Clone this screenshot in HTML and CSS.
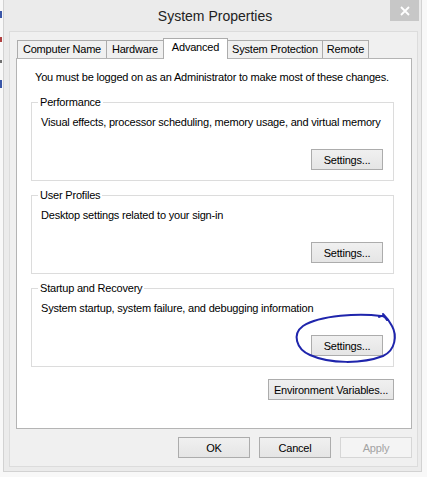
FILE: index.html
```html
<!DOCTYPE html>
<html>
<head>
<meta charset="utf-8">
<title>System Properties</title>
<link rel="stylesheet" href="styles.css">
</head>
<body>
<div class="window">
  <div class="titlebar">
    <div class="title">System Properties</div>
    <button class="close" aria-label="Close">
      <svg width="10" height="10" viewBox="0 0 10 10"><path d="M1 1 L9 9 M9 1 L1 9" stroke="#fff" stroke-width="1.8" fill="none"/></svg>
    </button>
  </div>
  <div class="client">
    <div class="tabs">
      <div class="tab tab-cn">Computer Name</div>
      <div class="tab tab-hw">Hardware</div>
      <div class="tab tab-adv active">Advanced</div>
      <div class="tab tab-sp">System Protection</div>
      <div class="tab tab-rm">Remote</div>
    </div>
    <div class="panel">
      <p class="intro">You must be logged on as an Administrator to make most of these changes.</p>
      <fieldset class="group">
        <legend>Performance</legend>
        <p class="desc">Visual effects, processor scheduling, memory usage, and virtual memory</p>
        <div class="btn-row"><button class="btn">Settings...</button></div>
      </fieldset>
      <fieldset class="group">
        <legend>User Profiles</legend>
        <p class="desc">Desktop settings related to your sign-in</p>
        <div class="btn-row"><button class="btn">Settings...</button></div>
      </fieldset>
      <fieldset class="group">
        <legend>Startup and Recovery</legend>
        <p class="desc">System startup, system failure, and debugging information</p>
        <div class="btn-row"><button class="btn">Settings...</button></div>
      </fieldset>
      <div class="env-row"><button class="btn btn-wide">Environment Variables...</button></div>
    </div>
    <div class="footer">
      <button class="btn">OK</button>
      <button class="btn">Cancel</button>
      <button class="btn" disabled>Apply</button>
    </div>
  </div>
</div>
<svg class="annotation" width="427" height="477" viewBox="0 0 427 477">
  <rect x="0" y="11" width="2" height="7" fill="#3a56a8"/>
  <rect x="0" y="37" width="2" height="5" fill="#b04040"/>
  <rect x="0" y="60" width="2" height="3" fill="#707070"/>
  <rect x="0" y="80" width="2" height="8" fill="#3a56a8"/>
  <path d="M 381 316 C 360 313, 320 315, 303 326 C 292 334, 296 349, 310 355 C 330 364, 362 364, 383 356 C 396 350, 397 335, 392 326 C 389 320, 386 317, 383 314 M 387 320 C 385 316, 382 315, 379 317" stroke="#1f25ac" stroke-width="2" fill="none" stroke-linecap="round"/>
</svg>
</body>
</html>
```

FILE: styles.css
```css
* { box-sizing: border-box; }
html, body { margin: 0; padding: 0; }
body {
  width: 427px;
  height: 477px;
  overflow: hidden;
  position: relative;
  background: #f8f8f8;
  font-family: "Liberation Sans", Arial, sans-serif;
  font-size: 11px;
  letter-spacing: -0.2px;
  color: #000;
}

.window {
  margin-left: 3px;
  width: 419px;
  height: 472px;
  background: #ebebeb;
  border: 1px solid #d2d2d2;
  border-top: none;
  display: flex;
  flex-direction: column;
}

.titlebar {
  height: 31px;
  flex: none;
  display: flex;
  align-items: flex-start;
}
.title {
  flex: 1;
  text-align: center;
  padding: 6px 0 0 36px;
  font-size: 14px;
  line-height: 20px;
  letter-spacing: 0;
  color: #222;
}
.close {
  width: 29px;
  height: 21px;
  margin-right: 2px;
  padding: 0;
  border: none;
  background: #c7c7c7;
  display: flex;
  align-items: center;
  justify-content: center;
}

.client {
  flex: 1;
  margin: 0 3px 4px 5px;
  background: #f0f0f0;
  border: 1px solid #dcdcdc;
  padding: 6px 5px 0 6px;
  display: flex;
  flex-direction: column;
}

.tabs {
  height: 20px;
  display: flex;
  align-items: flex-end;
  margin-left: 1px;
  position: relative;
  z-index: 1;
}
.tab {
  height: 18px;
  margin-right: -1px;
  border: 1px solid #acacac;
  border-bottom: none;
  background: #f0f0f0;
  text-align: center;
  line-height: 17px;
  white-space: nowrap;
}
.tab.active {
  height: 21px;
  margin-bottom: -1px;
  background: #fff;
  line-height: 17px;
  position: relative;
  z-index: 2;
}
.tab-cn { width: 90px; }
.tab-hw { width: 58px; }
.tab-adv { width: 65px; }
.tab-sp { width: 96px; }
.tab-rm { width: 47px; }

.panel {
  height: 371px;
  flex: none;
  background: #fff;
  border: 1px solid #b4b4b4;
  padding: 11px 17px 0 14px;
}
.intro {
  margin: 0 0 10px 4px;
  line-height: 15px;
}

.group {
  margin: 0 0 7px 0;
  padding: 5px 10px 10px 9px;
  border: 1px solid #dcdcdc;
  min-width: 0;
}
.group legend {
  padding: 0 2px;
  margin-left: -3px;
  line-height: 15px;
}
.desc {
  margin: 0;
  line-height: 15px;
}
.btn-row {
  margin-top: 19px;
  display: flex;
  justify-content: flex-end;
}

.btn {
  width: 72px;
  height: 21px;
  padding: 0;
  border: 1px solid #acacac;
  background: linear-gradient(#f0f0f0, #e5e5e5);
  font-family: inherit;
  font-size: 11px;
  letter-spacing: -0.2px;
  color: #000;
}
.btn:disabled {
  background: #f4f4f4;
  border-color: #d6d6d6;
  color: #a3a3a3;
}
.btn-wide { width: 126px; }

.env-row {
  margin-top: 12px;
  display: flex;
  justify-content: flex-end;
}

.footer {
  margin-top: 8px;
  display: flex;
  justify-content: flex-end;
  gap: 9px;
}

.annotation {
  position: absolute;
  left: 0;
  top: 0;
  pointer-events: none;
}
```
